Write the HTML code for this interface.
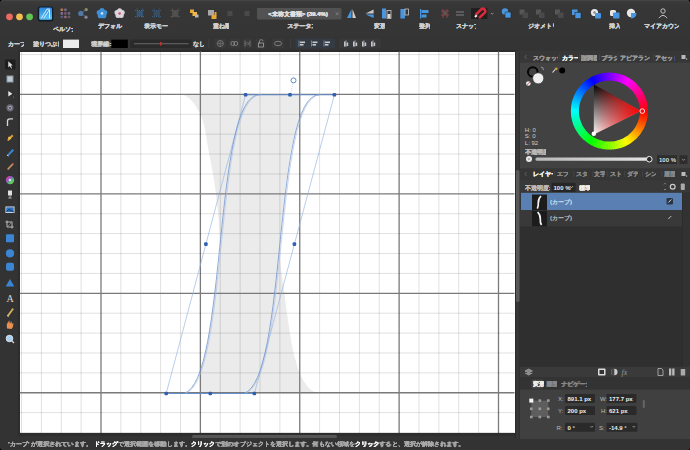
<!DOCTYPE html><html><head><meta charset="utf-8"><style>
*{margin:0;padding:0;box-sizing:border-box}
html,body{width:690px;height:450px;overflow:hidden;background:#000;font-family:"Liberation Sans",sans-serif}
.a{position:absolute}
.t{position:absolute;white-space:nowrap;color:#cfcfcf;font-size:6px;line-height:6px;font-weight:bold;text-shadow:0.4px 0 0 currentColor,0 0.4px 0 currentColor}
.l{font-weight:normal;text-shadow:none;font-size:6.5px}
.l.b{font-weight:bold}
#w{position:absolute;left:0;top:0;width:690px;height:450px;overflow:hidden;filter:blur(0.4px);border-radius:3.5px;background:#333}
</style></head><body><div id="w">
<div class="a" style="left:0;top:0;width:690px;height:36px;background:linear-gradient(#3b3b3b,#363636 7px,#353535)"></div><div class="a" style="left:0;top:36px;width:690px;height:15px;background:#343434"></div><div class="a" style="left:0;top:51px;width:18px;height:388px;background:#333"></div><div class="a" style="left:0;top:436px;width:690px;height:14px;background:#333"></div><div class="a" style="left:18px;top:49.5px;width:500px;height:386.5px;background:#2d2d2d"></div><div class="a" style="left:19.5px;top:51.5px;width:495px;height:381.5px;background:#fff"></div><svg class="a" style="left:0;top:0" width="690" height="450" viewBox="0 0 690 450"><defs><clipPath id="cv"><rect x="19.5" y="51.5" width="495" height="381.5"/></clipPath></defs><g clip-path="url(#cv)"><path d="M300,94.4 C299.97,97.83 300.38,109.07 299.8,115 C299.22,120.93 297.97,124.17 296.5,130 C295.03,135.83 292.92,139.33 291,150 C289.08,160.67 286.83,177.33 285,194 C283.17,210.67 280.10,233.50 280,250 C279.90,266.50 282.57,278.00 284.4,293 C286.23,308.00 289.10,328.67 291,340 C292.90,351.33 294.35,355.42 295.8,361 C297.25,366.58 298.17,369.83 299.7,373.5 C301.23,377.17 303.12,380.28 305,383 C306.88,385.72 309.00,388.05 311,389.8 C313.00,391.55 316.00,392.88 317,393.5 L200,393.5 C200.08,390.08 199.20,381.92 200.5,373 C201.80,364.08 205.48,353.33 207.8,340 C210.12,326.67 212.37,308.00 214.4,293 C216.43,278.00 219.73,266.50 220,250 C220.27,233.50 217.92,210.67 216,194 C214.08,177.33 210.33,160.67 208.5,150 C206.67,139.33 206.13,135.50 205,130 C203.87,124.50 202.87,120.33 201.7,117 C200.53,113.67 199.28,112.25 198,110 C196.72,107.75 195.50,105.45 194,103.5 C192.50,101.55 190.83,99.82 189,98.3 C187.17,96.78 184.00,95.05 183,94.4Z" fill="#ebebeb"/><line x1="21.50" y1="51" x2="21.50" y2="433" stroke="#000" stroke-opacity="0.12" stroke-width="1"/><line x1="41.38" y1="51" x2="41.38" y2="433" stroke="#000" stroke-opacity="0.12" stroke-width="1"/><line x1="61.25" y1="51" x2="61.25" y2="433" stroke="#000" stroke-opacity="0.12" stroke-width="1"/><line x1="81.12" y1="51" x2="81.12" y2="433" stroke="#000" stroke-opacity="0.12" stroke-width="1"/><line x1="101.00" y1="51" x2="101.00" y2="433" stroke="#7a7a7a" stroke-width="1.3"/><line x1="120.88" y1="51" x2="120.88" y2="433" stroke="#000" stroke-opacity="0.12" stroke-width="1"/><line x1="140.75" y1="51" x2="140.75" y2="433" stroke="#000" stroke-opacity="0.12" stroke-width="1"/><line x1="160.62" y1="51" x2="160.62" y2="433" stroke="#000" stroke-opacity="0.12" stroke-width="1"/><line x1="180.50" y1="51" x2="180.50" y2="433" stroke="#000" stroke-opacity="0.12" stroke-width="1"/><line x1="200.38" y1="51" x2="200.38" y2="433" stroke="#7a7a7a" stroke-width="1.3"/><line x1="220.25" y1="51" x2="220.25" y2="433" stroke="#000" stroke-opacity="0.12" stroke-width="1"/><line x1="240.12" y1="51" x2="240.12" y2="433" stroke="#000" stroke-opacity="0.12" stroke-width="1"/><line x1="260.00" y1="51" x2="260.00" y2="433" stroke="#000" stroke-opacity="0.12" stroke-width="1"/><line x1="279.88" y1="51" x2="279.88" y2="433" stroke="#000" stroke-opacity="0.12" stroke-width="1"/><line x1="299.75" y1="51" x2="299.75" y2="433" stroke="#7a7a7a" stroke-width="1.3"/><line x1="319.62" y1="51" x2="319.62" y2="433" stroke="#000" stroke-opacity="0.12" stroke-width="1"/><line x1="339.50" y1="51" x2="339.50" y2="433" stroke="#000" stroke-opacity="0.12" stroke-width="1"/><line x1="359.38" y1="51" x2="359.38" y2="433" stroke="#000" stroke-opacity="0.12" stroke-width="1"/><line x1="379.25" y1="51" x2="379.25" y2="433" stroke="#000" stroke-opacity="0.12" stroke-width="1"/><line x1="399.12" y1="51" x2="399.12" y2="433" stroke="#7a7a7a" stroke-width="1.3"/><line x1="419.00" y1="51" x2="419.00" y2="433" stroke="#000" stroke-opacity="0.12" stroke-width="1"/><line x1="438.88" y1="51" x2="438.88" y2="433" stroke="#000" stroke-opacity="0.12" stroke-width="1"/><line x1="458.75" y1="51" x2="458.75" y2="433" stroke="#000" stroke-opacity="0.12" stroke-width="1"/><line x1="478.62" y1="51" x2="478.62" y2="433" stroke="#000" stroke-opacity="0.12" stroke-width="1"/><line x1="498.50" y1="51" x2="498.50" y2="433" stroke="#7a7a7a" stroke-width="1.3"/><line x1="19.5" y1="54.62" x2="515" y2="54.62" stroke="#000" stroke-opacity="0.12" stroke-width="1"/><line x1="19.5" y1="74.51" x2="515" y2="74.51" stroke="#000" stroke-opacity="0.12" stroke-width="1"/><line x1="19.5" y1="94.40" x2="515" y2="94.40" stroke="#7a7a7a" stroke-width="1.3"/><line x1="19.5" y1="114.29" x2="515" y2="114.29" stroke="#000" stroke-opacity="0.12" stroke-width="1"/><line x1="19.5" y1="134.18" x2="515" y2="134.18" stroke="#000" stroke-opacity="0.12" stroke-width="1"/><line x1="19.5" y1="154.07" x2="515" y2="154.07" stroke="#000" stroke-opacity="0.12" stroke-width="1"/><line x1="19.5" y1="173.96" x2="515" y2="173.96" stroke="#000" stroke-opacity="0.12" stroke-width="1"/><line x1="19.5" y1="193.85" x2="515" y2="193.85" stroke="#7a7a7a" stroke-width="1.3"/><line x1="19.5" y1="213.74" x2="515" y2="213.74" stroke="#000" stroke-opacity="0.12" stroke-width="1"/><line x1="19.5" y1="233.63" x2="515" y2="233.63" stroke="#000" stroke-opacity="0.12" stroke-width="1"/><line x1="19.5" y1="253.52" x2="515" y2="253.52" stroke="#000" stroke-opacity="0.12" stroke-width="1"/><line x1="19.5" y1="273.41" x2="515" y2="273.41" stroke="#000" stroke-opacity="0.12" stroke-width="1"/><line x1="19.5" y1="293.30" x2="515" y2="293.30" stroke="#7a7a7a" stroke-width="1.3"/><line x1="19.5" y1="313.19" x2="515" y2="313.19" stroke="#000" stroke-opacity="0.12" stroke-width="1"/><line x1="19.5" y1="333.08" x2="515" y2="333.08" stroke="#000" stroke-opacity="0.12" stroke-width="1"/><line x1="19.5" y1="352.97" x2="515" y2="352.97" stroke="#000" stroke-opacity="0.12" stroke-width="1"/><line x1="19.5" y1="372.86" x2="515" y2="372.86" stroke="#000" stroke-opacity="0.12" stroke-width="1"/><line x1="19.5" y1="392.75" x2="515" y2="392.75" stroke="#7a7a7a" stroke-width="1.3"/><line x1="19.5" y1="412.64" x2="515" y2="412.64" stroke="#000" stroke-opacity="0.12" stroke-width="1"/><line x1="19.5" y1="432.53" x2="515" y2="432.53" stroke="#000" stroke-opacity="0.12" stroke-width="1"/><path d="M245.6,94.8 L166.2,393.5 M334.4,94.8 L254.4,393.5" stroke="#92b3e2" stroke-width="0.65" fill="none"/><path d="M245.6,94.8 L334.4,94.8 M166.2,393.5 L254.4,393.5" stroke="#5d8bd2" stroke-width="0.9" fill="none"/><path d="M259.50,94.8 C212.50,94.8 227.80,381.5 183.80,393.5" stroke="#6a90cf" stroke-width="0.75" fill="none"/><path d="M260.70,94.8 C213.70,94.8 229.00,381.5 185.00,393.5" stroke="#abc0e2" stroke-width="0.65" fill="none"/><path d="M319.30,94.8 C272.30,94.8 287.60,381.5 243.60,393.5" stroke="#6a90cf" stroke-width="0.75" fill="none"/><path d="M320.50,94.8 C273.50,94.8 288.80,381.5 244.80,393.5" stroke="#abc0e2" stroke-width="0.65" fill="none"/><line x1="290.2" y1="94.8" x2="293.3" y2="82.6" stroke="#92b3e2" stroke-width="0.5" stroke-dasharray="1 1"/><circle cx="293.5" cy="80.4" r="2.5" fill="#fff" stroke="#5d8bd2" stroke-width="1"/><rect x="243.79999999999998" y="93.0" width="3.6" height="3.6" rx="1.2" fill="#2f60b0"/><rect x="288.2" y="93.0" width="3.6" height="3.6" rx="1.2" fill="#2f60b0"/><rect x="332.59999999999997" y="93.0" width="3.6" height="3.6" rx="1.2" fill="#2f60b0"/><rect x="164.39999999999998" y="391.7" width="3.6" height="3.6" rx="1.2" fill="#2f60b0"/><rect x="208.5" y="391.7" width="3.6" height="3.6" rx="1.2" fill="#2f60b0"/><rect x="252.6" y="391.7" width="3.6" height="3.6" rx="1.2" fill="#2f60b0"/><rect x="204.1" y="242.35" width="3.6" height="3.6" rx="1.2" fill="#2f60b0"/><rect x="292.59999999999997" y="242.35" width="3.6" height="3.6" rx="1.2" fill="#2f60b0"/></g></svg><div class="a" style="left:192px;top:435px;width:145px;height:3px;background:#555;border-radius:2px"></div><div class="a" style="left:0;top:0;width:690px;height:1px;background:#444"></div><svg class="a" style="left:0;top:0" width="690" height="51" viewBox="0 0 690 51"><circle cx="9.5" cy="16.8" r="3.4" fill="#ec6a5f"/><circle cx="19.5" cy="16.8" r="3.4" fill="#f4be50"/><circle cx="29.6" cy="16.8" r="3.4" fill="#62c454"/><rect x="37.7" y="6.4" width="15.6" height="15" rx="2.5" fill="#0f1c2a"/><defs><linearGradient id="ad" x1="0" y1="0" x2="0" y2="1"><stop offset="0" stop-color="#2a86dc"/><stop offset="1" stop-color="#5cc6f7"/></linearGradient></defs><rect x="39.2" y="7.6" width="12.8" height="12.2" rx="1.2" fill="url(#ad)"/><path d="M41.5,18 L47,9 L49.5,9 M44,18 L49.5,9.5 L49.5,18" stroke="#e8f6ff" stroke-width="0.9" fill="none"/><rect x="60.5" y="8.5" width="2.6" height="2.6" rx="0.8" fill="#b07a50"/><rect x="64.1" y="8.5" width="2.6" height="2.6" rx="0.8" fill="#7a6a8a"/><rect x="60.5" y="12.1" width="2.6" height="2.6" rx="0.8" fill="#8a6a9a"/><rect x="64.1" y="12.1" width="2.6" height="2.6" rx="0.8" fill="#7a5a6a"/><rect x="67.7" y="12.1" width="2.6" height="2.6" rx="0.8" fill="#6a6a8a"/><rect x="60.5" y="15.7" width="2.6" height="2.6" rx="0.8" fill="#5a5a7a"/><rect x="64.1" y="15.7" width="2.6" height="2.6" rx="0.8" fill="#8a6a7a"/><rect x="67.7" y="15.7" width="2.6" height="2.6" rx="0.8" fill="#6a5a6a"/><circle cx="80.8" cy="13.4" r="2.6" fill="#4f78a6"/><circle cx="86.2" cy="9.6" r="1.6" fill="#8a9a6a"/><circle cx="86" cy="17.2" r="1.6" fill="#8a8aa0"/><path d="M81,13.4 L86,9.6 M81,13.4 L86,17" stroke="#5a7a9a" stroke-width="0.8"/><circle cx="102.00" cy="10.54" r="2.60" fill="#3f8fd6"/><circle cx="104.72" cy="12.52" r="2.60" fill="#3f8fd6"/><circle cx="103.68" cy="15.71" r="2.60" fill="#3f8fd6"/><circle cx="100.32" cy="15.71" r="2.60" fill="#3f8fd6"/><circle cx="99.28" cy="12.52" r="2.60" fill="#3f8fd6"/><circle cx="102" cy="13.4" r="3.12" fill="#3f8fd6"/><circle cx="102" cy="13.4" r="1.30" fill="#bfe3ff"/><circle cx="119.60" cy="10.65" r="2.50" fill="#dcd6dc"/><circle cx="122.22" cy="12.55" r="2.50" fill="#dcd6dc"/><circle cx="121.22" cy="15.62" r="2.50" fill="#dcd6dc"/><circle cx="117.98" cy="15.62" r="2.50" fill="#dcd6dc"/><circle cx="116.98" cy="12.55" r="2.50" fill="#dcd6dc"/><circle cx="119.6" cy="13.4" r="3.00" fill="#dcd6dc"/><circle cx="119.6" cy="13.4" r="1.25" fill="#c85a6a"/><g opacity="1"><rect x="137.3" y="10.8" width="4.9" height="5.4" fill="#3a7cc6" opacity="0.45"/><path d="M135,10.5 H144.5 M135,16.5 H144.5 M137,8.5 V18.5 M142.5,8.5 V18.5" stroke="#3a7cc6" stroke-width="0.7" stroke-dasharray="1 1"/></g><g opacity="1"><rect x="154.3" y="10.8" width="4.9" height="5.4" fill="#3a6a9a" opacity="0.45"/><path d="M152,10.5 H161.5 M152,16.5 H161.5 M154,8.5 V18.5 M159.5,8.5 V18.5" stroke="#3a6a9a" stroke-width="0.7" stroke-dasharray="1 1"/></g><g opacity="1"><rect x="172.8" y="10.8" width="4.9" height="5.4" fill="#707070" opacity="0.45"/><path d="M170.5,10.5 H180.0 M170.5,16.5 H180.0 M172.5,8.5 V18.5 M178.0,8.5 V18.5" stroke="#707070" stroke-width="0.7" stroke-dasharray="1 1"/></g><rect x="190" y="9.5" width="4" height="3.5" fill="#e8a838"/><rect x="192.5" y="12" width="4.5" height="4" fill="#f0b840"/><rect x="195" y="14.5" width="3.5" height="3" fill="#b8b8b8"/><rect x="208" y="10" width="6" height="5.5" fill="#a8a8a8"/><path d="M211.5,15 H216.5 V19 H211.5 Z" fill="#e8a838"/><rect x="214.5" y="12" width="2" height="3.5" fill="#e8a838"/><rect x="223" y="8" width="14.5" height="11.5" rx="1" fill="#363636"/><rect x="239" y="8" width="16.5" height="11.5" rx="1" fill="#363636"/><rect x="227.5" y="11" width="5" height="5" fill="#4a4a4a"/><rect x="244.5" y="11" width="5" height="5" fill="#4a4a4a"/><rect x="257" y="8" width="84.5" height="11.4" rx="1.2" fill="#525252"/><path d="M335.8,12.3 L338.6,15.1 M338.6,12.3 L335.8,15.1" stroke="#8a8a8a" stroke-width="0.8"/><path d="M351.5,9 L347,18 L351.5,18 Z" fill="#4896e0"/><path d="M352.5,9 L356,18 L352.5,18 Z" fill="#d0d0d0"/><path d="M373.6,9.5 L365.6,13.5 L373.6,13.5 Z" fill="#c8c8c8"/><path d="M373.6,14.5 L365.6,14.5 L373.6,18 Z" fill="#4896e0"/><rect x="382" y="8.5" width="4" height="10" fill="#4896e0"/><rect x="387" y="10.5" width="4" height="8" fill="none" stroke="#c8c8c8" stroke-width="0.8"/><rect x="387.5" y="14" width="3" height="4" fill="#d8d8d8"/><rect x="400.4" y="9" width="4.5" height="9.5" fill="#4896e0"/><rect x="405" y="9" width="3.5" height="6" fill="none" stroke="#c8c8c8" stroke-width="0.8"/><rect x="420" y="9" width="1.2" height="9.5" fill="#4896e0"/><rect x="421.5" y="10" width="7" height="3" fill="#4896e0"/><rect x="421.5" y="14.5" width="5" height="3" fill="#4896e0"/><path d="M441,11 H449 M441,15 H449 M443,9 V18 M447,9 V18" stroke="#9a4a4a" stroke-width="0.8"/><rect x="443.5" y="11.5" width="3" height="3" fill="#5a5a5a"/><path d="M456,12 H464 M456,15 H464" stroke="#8a8a8a" stroke-width="0.9"/><rect x="471" y="8" width="16.5" height="11" rx="1" fill="#202020"/><path d="M475.5,17 L481.5,11 A2.6,2.6 0 0 1 485,14.5 L479,20" stroke="#d82a3a" stroke-width="2.6" fill="none" transform="translate(0,-2)"/><path d="M475.2,15.4 l1.4,1.4" stroke="#eee" stroke-width="2.6"/><path d="M491,13 l1.2,1.2 l1.2,-1.2" stroke="#aaa" stroke-width="0.8" fill="none"/><circle cx="505" cy="11.5" r="3.2" fill="#4896e0"/><rect x="505" y="12" width="6" height="6" rx="1" fill="#4896e0" stroke="#2c2c2c" stroke-width="0.6"/><rect x="519.6" y="9.5" width="5" height="5" fill="#575757"/><rect x="522.6" y="12.5" width="5.5" height="5.5" fill="#4a4a4a"/><rect x="536" y="9.5" width="5" height="5" fill="#575757"/><rect x="539" y="12.5" width="5.5" height="5.5" fill="#4a4a4a"/><rect x="555" y="9.5" width="5" height="5" fill="#575757"/><rect x="558" y="12.5" width="5.5" height="5.5" fill="#4a4a4a"/><rect x="572" y="9.5" width="5.5" height="5.5" fill="#4896e0"/><rect x="575" y="12.5" width="6" height="6" fill="#4896e0" stroke="#2c2c2c" stroke-width="0.6"/><circle cx="594.5" cy="12.5" r="3.6" fill="#e8e8e8"/><rect x="595" y="13" width="6" height="5.5" rx="1" fill="#4896e0"/><circle cx="594.5" cy="12.5" r="1.2" fill="#888"/><rect x="610" y="10" width="6" height="6" rx="1.5" fill="#e8e8e8"/><rect x="613" y="12.5" width="6.5" height="6" rx="0.8" fill="#4896e0"/><circle cx="631" cy="13" r="4.2" fill="#e8e8e8"/><path d="M631,13 V18.5 A5,5 0 0 0 636.5,13 Z" fill="#4896e0"/><circle cx="663" cy="11" r="2.2" fill="none" stroke="#cfcfcf" stroke-width="0.9"/><path d="M658.8,18.2 Q663,12.5 667.2,18.2" fill="none" stroke="#cfcfcf" stroke-width="0.9"/><rect x="63" y="39.6" width="16" height="8.4" fill="#ececec"/><rect x="111.3" y="39.6" width="16.5" height="8.4" fill="#000"/><rect x="130.4" y="39.5" width="61" height="8.5" fill="#2a2a2a"/><rect x="134" y="43" width="54.7" height="1.3" fill="#5a5a5a"/><rect x="160" y="42" width="1.6" height="3.5" fill="#c83030"/><rect x="208.5" y="38.5" width="0.6" height="10" fill="#444"/><rect x="214.5" y="38.5" width="11.5" height="10" rx="1" fill="#393939"/><rect x="228.5" y="38.5" width="11.5" height="10" rx="1" fill="#393939"/><rect x="242.5" y="38.5" width="10" height="10" rx="1" fill="#393939"/><rect x="255.5" y="38.5" width="10.5" height="10" rx="1" fill="#393939"/><rect x="272" y="38.5" width="12" height="10" rx="1" fill="#393939"/><circle cx="220.3" cy="43.5" r="3" fill="none" stroke="#8a8a8a" stroke-width="0.7"/><path d="M217.3,43.5 H223.3 M220.3,40.5 V46.5" stroke="#8a8a8a" stroke-width="0.5"/><rect x="231" y="41.5" width="3.5" height="4" rx="1.5" fill="none" stroke="#9a9a9a" stroke-width="0.7"/><rect x="234" y="41.5" width="3.5" height="4" rx="1.5" fill="none" stroke="#9a9a9a" stroke-width="0.7"/><path d="M245,40.5 V46.5 M250,40.5 V46.5 M246,43.5 l1.2,-1.2 M246,43.5 l1.2,1.2 M249,43.5 l-1.2,-1.2 M249,43.5 l-1.2,1.2" stroke="#9a9a9a" stroke-width="0.6"/><rect x="258.5" y="43" width="5" height="4" fill="none" stroke="#b0b0b0" stroke-width="0.7"/><path d="M259.5,43 V41 A1.8,1.8 0 0 1 263,41" fill="none" stroke="#b0b0b0" stroke-width="0.6"/><ellipse cx="278" cy="43.5" rx="3.6" ry="2.2" fill="none" stroke="#9a9a9a" stroke-width="0.7"/><rect x="290.5" y="38.5" width="0.6" height="10" fill="#444"/><rect x="295.5" y="38.5" width="39.5" height="10" rx="1" fill="#353b44"/><rect x="339" y="38.5" width="42" height="10" rx="1" fill="#393939"/><path d="M299,40.5 V46.5" stroke="#8aa6cc" stroke-width="0.7"/><rect x="300" y="41.5" width="5" height="1.6" fill="#c8c8c8"/><rect x="300" y="44" width="3.5" height="1.6" fill="#c8c8c8"/><path d="M311.5,40.5 V46.5" stroke="#8aa6cc" stroke-width="0.7"/><rect x="312.5" y="41.5" width="5" height="1.6" fill="#c8c8c8"/><rect x="312.5" y="44" width="3.5" height="1.6" fill="#c8c8c8"/><path d="M324,40.5 V46.5" stroke="#8aa6cc" stroke-width="0.7"/><rect x="325" y="41.5" width="5" height="1.6" fill="#c8c8c8"/><rect x="325" y="44" width="3.5" height="1.6" fill="#c8c8c8"/><path d="M346,40 V47" stroke="#8aa6cc" stroke-width="0.7"/><rect x="344" y="41.5" width="1.6" height="5" fill="#c8c8c8"/><rect x="346.6" y="42.5" width="1.6" height="3.5" fill="#c8c8c8"/><path d="M355,40 V47" stroke="#8aa6cc" stroke-width="0.7"/><rect x="353" y="41.5" width="1.6" height="5" fill="#c8c8c8"/><rect x="355.6" y="42.5" width="1.6" height="3.5" fill="#c8c8c8"/><path d="M364,40 V47" stroke="#8aa6cc" stroke-width="0.7"/><rect x="362" y="41.5" width="1.6" height="5" fill="#c8c8c8"/><rect x="364.6" y="42.5" width="1.6" height="3.5" fill="#c8c8c8"/><path d="M373,40 V47" stroke="#8aa6cc" stroke-width="0.7"/><rect x="371" y="41.5" width="1.6" height="5" fill="#c8c8c8"/><rect x="373.6" y="42.5" width="1.6" height="3.5" fill="#c8c8c8"/></svg><div class="t" style="left:52.6px;top:24.6px;width:20.7px;height:8px;overflow:hidden;font-size:6px;line-height:8px;color:#cfcfcf;">ペルソナ</div><div class="t" style="left:97.8px;top:21.6px;width:25.5px;height:8px;overflow:hidden;font-size:6px;line-height:8px;color:#cfcfcf;">デフォルト</div><div class="t" style="left:143.5px;top:21.6px;width:25.5px;height:8px;overflow:hidden;font-size:6px;line-height:8px;color:#cfcfcf;">表示モード</div><div class="t" style="left:213px;top:21.6px;width:15.9px;height:8px;overflow:hidden;font-size:6px;line-height:8px;color:#cfcfcf;">重ね順</div><div class="t" style="left:287.4px;top:21.6px;width:25.5px;height:8px;overflow:hidden;font-size:6px;line-height:8px;color:#cfcfcf;">ステータス</div><div class="t" style="left:373.6px;top:21.6px;width:11.1px;height:8px;overflow:hidden;font-size:6px;line-height:8px;color:#cfcfcf;">変形</div><div class="t" style="left:418.7px;top:21.6px;width:11.1px;height:8px;overflow:hidden;font-size:6px;line-height:8px;color:#cfcfcf;">整列</div><div class="t" style="left:455.6px;top:21.6px;width:20.7px;height:8px;overflow:hidden;font-size:6px;line-height:8px;color:#cfcfcf;">スナップ</div><div class="t" style="left:528px;top:21.6px;width:25.5px;height:8px;overflow:hidden;font-size:6px;line-height:8px;color:#cfcfcf;">ジオメトリ</div><div class="t" style="left:608.8px;top:21.6px;width:11.1px;height:8px;overflow:hidden;font-size:6px;line-height:8px;color:#cfcfcf;">挿入</div><div class="t" style="left:643.6px;top:21.6px;width:35.1px;height:8px;overflow:hidden;font-size:6px;line-height:8px;color:#cfcfcf;">マイアカウント</div><div class="t" style="left:268px;top:10.2px;width:73.5px;height:8px;overflow:hidden;font-size:6px;line-height:8px;color:#e0e0e0;">&lt;未称文書類&gt; (39.4%)</div><div class="t" style="left:7.8px;top:40px;width:15.9px;height:8px;overflow:hidden;font-size:6px;line-height:8px;color:#cfcfcf;">カーブ</div><div class="t" style="left:33px;top:40px;width:25.5px;height:8px;overflow:hidden;font-size:6px;line-height:8px;color:#cfcfcf;">塗りつぶし</div><div class="t" style="left:91.3px;top:40px;width:20.7px;height:8px;overflow:hidden;font-size:6px;line-height:8px;color:#cfcfcf;">境界線:</div><div class="t" style="left:193px;top:40px;width:11.1px;height:8px;overflow:hidden;font-size:6px;line-height:8px;color:#cfcfcf;">なし</div><svg class="a" style="left:0;top:51px" width="20" height="300" viewBox="0 51 20 300"><rect x="5" y="59.5" width="10.5" height="10" rx="1" fill="#1e1e1e"/><path d="M8.3,61.3 V67.5 L9.8,66 L11.2,68.6 L12,68.2 L10.8,65.6 L12.8,65.4 Z" fill="#e0e0e0"/><rect x="6.5" y="75.5" width="7" height="7" fill="#8a9aa8"/><rect x="7.5" y="76.5" width="5" height="5" fill="#c0c8d0"/><path d="M8.3,91 V96.5 L12.3,93.7 Z" fill="#e8e8e8"/><circle cx="13.5" cy="97" r="0.5" fill="#888"/><circle cx="10" cy="107.8" r="3.6" fill="#6a6a78"/><circle cx="10" cy="107.8" r="2" fill="#a0a0b0"/><circle cx="10" cy="107.8" r="0.9" fill="#334"/><path d="M7.5,126 V121 Q7.5,118.8 10,118.8 H13" stroke="#d8d8d8" stroke-width="1.3" fill="none"/><path d="M7,140 L12,134.5 L13.5,136 L8.5,141 Z" fill="#d8a038"/><circle cx="9.5" cy="138" r="1.5" fill="#f0c050"/><path d="M7,155 L12.5,149 L14,150.5 L8.5,156 Z" fill="#3a88d0"/><path d="M7,155 l1.5,1" stroke="#ddd" stroke-width="1"/><path d="M7,169 L12.5,163 L13.8,164.3 L8.3,170 Z" fill="#c89060"/><path d="M12.5,163 l1.3,1.3" stroke="#a83a3a" stroke-width="1.2"/><defs><linearGradient id="cw" x1="0" y1="0" x2="1" y2="1"><stop offset="0" stop-color="#e84a4a"/><stop offset="0.35" stop-color="#a64ad8"/><stop offset="0.65" stop-color="#3ac86a"/><stop offset="1" stop-color="#e8c838"/></linearGradient></defs><circle cx="10" cy="180.1" r="4.2" fill="url(#cw)"/><circle cx="10" cy="180.1" r="1.3" fill="#ddd"/><path d="M8,190.5 H12 V195.5 H8 Z" fill="#e0e0e0"/><path d="M10,195.5 V198 M8.3,198 H11.7" stroke="#ccc" stroke-width="0.8"/><rect x="5.5" y="206.5" width="9" height="6.5" fill="#e8e8e8"/><rect x="6.3" y="207.3" width="7.4" height="4.9" fill="#2a72c0"/><path d="M6.3,211.5 L9,209.5 L13.7,212" stroke="#16365a" stroke-width="1" fill="none"/><path d="M7,220.5 V227 H13.5 M5.5,222 H12 V228.5" stroke="#c8c8c8" stroke-width="0.9" fill="none"/><path d="M7.5,226.5 L12.5,221.5" stroke="#999" stroke-width="0.6"/><rect x="6" y="234.3" width="8" height="8" rx="0.8" fill="#3a86d4"/><circle cx="10" cy="253.3" r="4.1" fill="#3a86d4"/><rect x="6" y="262.7" width="8" height="8" rx="2" fill="#3a86d4"/><path d="M10,279 L14.3,286.5 H5.7 Z" fill="#3a86d4"/><text x="10" y="302.3" font-family="Liberation Serif" font-size="10" fill="#d8d8d8" text-anchor="middle">A</text><path d="M7,315.5 L12.5,308 L13.8,309.3 L8.5,316.5 Z" fill="#d8b060"/><path d="M7,315.5 l1.5,1" stroke="#ddd" stroke-width="1"/><path d="M7,328.5 Q6.5,324 7.3,322 L7.8,324 L8.3,320.5 L9.2,323.5 L9.8,320 L10.6,323.5 L11.4,321 L12,324 L13.5,323 Q13.5,327 11.5,329 Z" fill="#e89050"/><circle cx="9.5" cy="338.5" r="3.3" fill="#a8d0f0" stroke="#e0e8f0" stroke-width="0.9"/><path d="M12,341 L14,343" stroke="#d8d8d8" stroke-width="1.3"/></svg><svg class="a" style="left:515px;top:51px" width="175" height="388" viewBox="515 51 175 388"><rect x="515" y="51" width="175" height="388" fill="#2a2a2a"/><rect x="516" y="51" width="3.5" height="388" fill="#363636"/><rect x="516" y="170" width="3.5" height="132" rx="1.5" fill="#585858"/><rect x="520" y="51" width="170" height="388" fill="#2f2f2f"/><rect x="520" y="51" width="170" height="11.5" fill="#373737"/><rect x="520" y="62.5" width="170" height="106.2" fill="#424242"/><circle cx="532.8" cy="72" r="4.8" fill="none" stroke="#050505" stroke-width="2"/><circle cx="538.2" cy="78.3" r="5.6" fill="#efefef" stroke="#3c3c3c" stroke-width="0.8"/><circle cx="528.3" cy="83.5" r="2.3" fill="#eee"/><path d="M526.8,85 L529.8,82" stroke="#d03030" stroke-width="0.8"/><path d="M541,67 Q543.5,67 543.5,70" stroke="#ccc" stroke-width="0.6" fill="none"/><path d="M552.5,72.5 L556,68.5" stroke="#e8e8e8" stroke-width="1.1"/><circle cx="556.2" cy="68.8" r="1.4" fill="#c89a38"/><circle cx="562.2" cy="70.4" r="3" fill="#000"/><path d="M643.90,110.86 A34.5,34.5 0 0 1 643.84,113.15" stroke="hsl(0,100%,50%)" stroke-width="8" fill="none"/><path d="M643.86,112.67 A34.5,34.5 0 0 1 643.68,114.95" stroke="hsl(3,100%,50%)" stroke-width="8" fill="none"/><path d="M643.74,114.47 A34.5,34.5 0 0 1 643.44,116.73" stroke="hsl(6,100%,50%)" stroke-width="8" fill="none"/><path d="M643.51,116.26 A34.5,34.5 0 0 1 643.10,118.51" stroke="hsl(9,100%,50%)" stroke-width="8" fill="none"/><path d="M643.20,118.04 A34.5,34.5 0 0 1 642.66,120.26" stroke="hsl(12,100%,50%)" stroke-width="8" fill="none"/><path d="M642.79,119.80 A34.5,34.5 0 0 1 642.14,121.99" stroke="hsl(15,100%,50%)" stroke-width="8" fill="none"/><path d="M642.29,121.53 A34.5,34.5 0 0 1 641.52,123.69" stroke="hsl(18,100%,50%)" stroke-width="8" fill="none"/><path d="M641.69,123.24 A34.5,34.5 0 0 1 640.82,125.35" stroke="hsl(21,100%,50%)" stroke-width="8" fill="none"/><path d="M641.01,124.91 A34.5,34.5 0 0 1 640.03,126.98" stroke="hsl(24,100%,50%)" stroke-width="8" fill="none"/><path d="M640.25,126.55 A34.5,34.5 0 0 1 639.16,128.56" stroke="hsl(27,100%,50%)" stroke-width="8" fill="none"/><path d="M639.40,128.14 A34.5,34.5 0 0 1 638.20,130.09" stroke="hsl(30,100%,50%)" stroke-width="8" fill="none"/><path d="M638.46,129.69 A34.5,34.5 0 0 1 637.17,131.57" stroke="hsl(33,100%,50%)" stroke-width="8" fill="none"/><path d="M637.45,131.18 A34.5,34.5 0 0 1 636.06,133.00" stroke="hsl(36,100%,50%)" stroke-width="8" fill="none"/><path d="M636.36,132.62 A34.5,34.5 0 0 1 634.88,134.36" stroke="hsl(39,100%,50%)" stroke-width="8" fill="none"/><path d="M635.20,134.01 A34.5,34.5 0 0 1 633.62,135.66" stroke="hsl(42,100%,50%)" stroke-width="8" fill="none"/><path d="M633.96,135.32 A34.5,34.5 0 0 1 632.31,136.90" stroke="hsl(45,100%,50%)" stroke-width="8" fill="none"/><path d="M632.66,136.58 A34.5,34.5 0 0 1 630.92,138.06" stroke="hsl(48,100%,50%)" stroke-width="8" fill="none"/><path d="M631.30,137.76 A34.5,34.5 0 0 1 629.48,139.15" stroke="hsl(51,100%,50%)" stroke-width="8" fill="none"/><path d="M629.87,138.87 A34.5,34.5 0 0 1 627.99,140.16" stroke="hsl(54,100%,50%)" stroke-width="8" fill="none"/><path d="M628.39,139.90 A34.5,34.5 0 0 1 626.44,141.10" stroke="hsl(57,100%,50%)" stroke-width="8" fill="none"/><path d="M626.86,140.86 A34.5,34.5 0 0 1 624.85,141.95" stroke="hsl(60,100%,50%)" stroke-width="8" fill="none"/><path d="M625.28,141.73 A34.5,34.5 0 0 1 623.21,142.71" stroke="hsl(63,100%,50%)" stroke-width="8" fill="none"/><path d="M623.65,142.52 A34.5,34.5 0 0 1 621.54,143.39" stroke="hsl(66,100%,50%)" stroke-width="8" fill="none"/><path d="M621.99,143.22 A34.5,34.5 0 0 1 619.83,143.99" stroke="hsl(69,100%,50%)" stroke-width="8" fill="none"/><path d="M620.29,143.84 A34.5,34.5 0 0 1 618.10,144.49" stroke="hsl(72,100%,50%)" stroke-width="8" fill="none"/><path d="M618.56,144.36 A34.5,34.5 0 0 1 616.34,144.90" stroke="hsl(75,100%,50%)" stroke-width="8" fill="none"/><path d="M616.81,144.80 A34.5,34.5 0 0 1 614.56,145.21" stroke="hsl(78,100%,50%)" stroke-width="8" fill="none"/><path d="M615.03,145.14 A34.5,34.5 0 0 1 612.77,145.44" stroke="hsl(81,100%,50%)" stroke-width="8" fill="none"/><path d="M613.25,145.38 A34.5,34.5 0 0 1 610.97,145.56" stroke="hsl(84,100%,50%)" stroke-width="8" fill="none"/><path d="M611.45,145.54 A34.5,34.5 0 0 1 609.16,145.60" stroke="hsl(87,100%,50%)" stroke-width="8" fill="none"/><path d="M609.64,145.60 A34.5,34.5 0 0 1 607.35,145.54" stroke="hsl(90,100%,50%)" stroke-width="8" fill="none"/><path d="M607.83,145.56 A34.5,34.5 0 0 1 605.55,145.38" stroke="hsl(93,100%,50%)" stroke-width="8" fill="none"/><path d="M606.03,145.44 A34.5,34.5 0 0 1 603.77,145.14" stroke="hsl(96,100%,50%)" stroke-width="8" fill="none"/><path d="M604.24,145.21 A34.5,34.5 0 0 1 601.99,144.80" stroke="hsl(99,100%,50%)" stroke-width="8" fill="none"/><path d="M602.46,144.90 A34.5,34.5 0 0 1 600.24,144.36" stroke="hsl(102,100%,50%)" stroke-width="8" fill="none"/><path d="M600.70,144.49 A34.5,34.5 0 0 1 598.51,143.84" stroke="hsl(105,100%,50%)" stroke-width="8" fill="none"/><path d="M598.97,143.99 A34.5,34.5 0 0 1 596.81,143.22" stroke="hsl(108,100%,50%)" stroke-width="8" fill="none"/><path d="M597.26,143.39 A34.5,34.5 0 0 1 595.15,142.52" stroke="hsl(111,100%,50%)" stroke-width="8" fill="none"/><path d="M595.59,142.71 A34.5,34.5 0 0 1 593.52,141.73" stroke="hsl(114,100%,50%)" stroke-width="8" fill="none"/><path d="M593.95,141.95 A34.5,34.5 0 0 1 591.94,140.86" stroke="hsl(117,100%,50%)" stroke-width="8" fill="none"/><path d="M592.36,141.10 A34.5,34.5 0 0 1 590.41,139.90" stroke="hsl(120,100%,50%)" stroke-width="8" fill="none"/><path d="M590.81,140.16 A34.5,34.5 0 0 1 588.93,138.87" stroke="hsl(123,100%,50%)" stroke-width="8" fill="none"/><path d="M589.32,139.15 A34.5,34.5 0 0 1 587.50,137.76" stroke="hsl(126,100%,50%)" stroke-width="8" fill="none"/><path d="M587.88,138.06 A34.5,34.5 0 0 1 586.14,136.58" stroke="hsl(129,100%,50%)" stroke-width="8" fill="none"/><path d="M586.49,136.90 A34.5,34.5 0 0 1 584.84,135.32" stroke="hsl(132,100%,50%)" stroke-width="8" fill="none"/><path d="M585.18,135.66 A34.5,34.5 0 0 1 583.60,134.01" stroke="hsl(135,100%,50%)" stroke-width="8" fill="none"/><path d="M583.92,134.36 A34.5,34.5 0 0 1 582.44,132.62" stroke="hsl(138,100%,50%)" stroke-width="8" fill="none"/><path d="M582.74,133.00 A34.5,34.5 0 0 1 581.35,131.18" stroke="hsl(141,100%,50%)" stroke-width="8" fill="none"/><path d="M581.63,131.57 A34.5,34.5 0 0 1 580.34,129.69" stroke="hsl(144,100%,50%)" stroke-width="8" fill="none"/><path d="M580.60,130.09 A34.5,34.5 0 0 1 579.40,128.14" stroke="hsl(147,100%,50%)" stroke-width="8" fill="none"/><path d="M579.64,128.56 A34.5,34.5 0 0 1 578.55,126.55" stroke="hsl(150,100%,50%)" stroke-width="8" fill="none"/><path d="M578.77,126.98 A34.5,34.5 0 0 1 577.79,124.91" stroke="hsl(153,100%,50%)" stroke-width="8" fill="none"/><path d="M577.98,125.35 A34.5,34.5 0 0 1 577.11,123.24" stroke="hsl(156,100%,50%)" stroke-width="8" fill="none"/><path d="M577.28,123.69 A34.5,34.5 0 0 1 576.51,121.53" stroke="hsl(159,100%,50%)" stroke-width="8" fill="none"/><path d="M576.66,121.99 A34.5,34.5 0 0 1 576.01,119.80" stroke="hsl(162,100%,50%)" stroke-width="8" fill="none"/><path d="M576.14,120.26 A34.5,34.5 0 0 1 575.60,118.04" stroke="hsl(165,100%,50%)" stroke-width="8" fill="none"/><path d="M575.70,118.51 A34.5,34.5 0 0 1 575.29,116.26" stroke="hsl(168,100%,50%)" stroke-width="8" fill="none"/><path d="M575.36,116.73 A34.5,34.5 0 0 1 575.06,114.47" stroke="hsl(171,100%,50%)" stroke-width="8" fill="none"/><path d="M575.12,114.95 A34.5,34.5 0 0 1 574.94,112.67" stroke="hsl(174,100%,50%)" stroke-width="8" fill="none"/><path d="M574.96,113.15 A34.5,34.5 0 0 1 574.90,110.86" stroke="hsl(177,100%,50%)" stroke-width="8" fill="none"/><path d="M574.90,111.34 A34.5,34.5 0 0 1 574.96,109.05" stroke="hsl(180,100%,50%)" stroke-width="8" fill="none"/><path d="M574.94,109.53 A34.5,34.5 0 0 1 575.12,107.25" stroke="hsl(183,100%,50%)" stroke-width="8" fill="none"/><path d="M575.06,107.73 A34.5,34.5 0 0 1 575.36,105.47" stroke="hsl(186,100%,50%)" stroke-width="8" fill="none"/><path d="M575.29,105.94 A34.5,34.5 0 0 1 575.70,103.69" stroke="hsl(189,100%,50%)" stroke-width="8" fill="none"/><path d="M575.60,104.16 A34.5,34.5 0 0 1 576.14,101.94" stroke="hsl(192,100%,50%)" stroke-width="8" fill="none"/><path d="M576.01,102.40 A34.5,34.5 0 0 1 576.66,100.21" stroke="hsl(195,100%,50%)" stroke-width="8" fill="none"/><path d="M576.51,100.67 A34.5,34.5 0 0 1 577.28,98.51" stroke="hsl(198,100%,50%)" stroke-width="8" fill="none"/><path d="M577.11,98.96 A34.5,34.5 0 0 1 577.98,96.85" stroke="hsl(201,100%,50%)" stroke-width="8" fill="none"/><path d="M577.79,97.29 A34.5,34.5 0 0 1 578.77,95.22" stroke="hsl(204,100%,50%)" stroke-width="8" fill="none"/><path d="M578.55,95.65 A34.5,34.5 0 0 1 579.64,93.64" stroke="hsl(207,100%,50%)" stroke-width="8" fill="none"/><path d="M579.40,94.06 A34.5,34.5 0 0 1 580.60,92.11" stroke="hsl(210,100%,50%)" stroke-width="8" fill="none"/><path d="M580.34,92.51 A34.5,34.5 0 0 1 581.63,90.63" stroke="hsl(213,100%,50%)" stroke-width="8" fill="none"/><path d="M581.35,91.02 A34.5,34.5 0 0 1 582.74,89.20" stroke="hsl(216,100%,50%)" stroke-width="8" fill="none"/><path d="M582.44,89.58 A34.5,34.5 0 0 1 583.92,87.84" stroke="hsl(219,100%,50%)" stroke-width="8" fill="none"/><path d="M583.60,88.19 A34.5,34.5 0 0 1 585.18,86.54" stroke="hsl(222,100%,50%)" stroke-width="8" fill="none"/><path d="M584.84,86.88 A34.5,34.5 0 0 1 586.49,85.30" stroke="hsl(225,100%,50%)" stroke-width="8" fill="none"/><path d="M586.14,85.62 A34.5,34.5 0 0 1 587.88,84.14" stroke="hsl(228,100%,50%)" stroke-width="8" fill="none"/><path d="M587.50,84.44 A34.5,34.5 0 0 1 589.32,83.05" stroke="hsl(231,100%,50%)" stroke-width="8" fill="none"/><path d="M588.93,83.33 A34.5,34.5 0 0 1 590.81,82.04" stroke="hsl(234,100%,50%)" stroke-width="8" fill="none"/><path d="M590.41,82.30 A34.5,34.5 0 0 1 592.36,81.10" stroke="hsl(237,100%,50%)" stroke-width="8" fill="none"/><path d="M591.94,81.34 A34.5,34.5 0 0 1 593.95,80.25" stroke="hsl(240,100%,50%)" stroke-width="8" fill="none"/><path d="M593.52,80.47 A34.5,34.5 0 0 1 595.59,79.49" stroke="hsl(243,100%,50%)" stroke-width="8" fill="none"/><path d="M595.15,79.68 A34.5,34.5 0 0 1 597.26,78.81" stroke="hsl(246,100%,50%)" stroke-width="8" fill="none"/><path d="M596.81,78.98 A34.5,34.5 0 0 1 598.97,78.21" stroke="hsl(249,100%,50%)" stroke-width="8" fill="none"/><path d="M598.51,78.36 A34.5,34.5 0 0 1 600.70,77.71" stroke="hsl(252,100%,50%)" stroke-width="8" fill="none"/><path d="M600.24,77.84 A34.5,34.5 0 0 1 602.46,77.30" stroke="hsl(255,100%,50%)" stroke-width="8" fill="none"/><path d="M601.99,77.40 A34.5,34.5 0 0 1 604.24,76.99" stroke="hsl(258,100%,50%)" stroke-width="8" fill="none"/><path d="M603.77,77.06 A34.5,34.5 0 0 1 606.03,76.76" stroke="hsl(261,100%,50%)" stroke-width="8" fill="none"/><path d="M605.55,76.82 A34.5,34.5 0 0 1 607.83,76.64" stroke="hsl(264,100%,50%)" stroke-width="8" fill="none"/><path d="M607.35,76.66 A34.5,34.5 0 0 1 609.64,76.60" stroke="hsl(267,100%,50%)" stroke-width="8" fill="none"/><path d="M609.16,76.60 A34.5,34.5 0 0 1 611.45,76.66" stroke="hsl(270,100%,50%)" stroke-width="8" fill="none"/><path d="M610.97,76.64 A34.5,34.5 0 0 1 613.25,76.82" stroke="hsl(273,100%,50%)" stroke-width="8" fill="none"/><path d="M612.77,76.76 A34.5,34.5 0 0 1 615.03,77.06" stroke="hsl(276,100%,50%)" stroke-width="8" fill="none"/><path d="M614.56,76.99 A34.5,34.5 0 0 1 616.81,77.40" stroke="hsl(279,100%,50%)" stroke-width="8" fill="none"/><path d="M616.34,77.30 A34.5,34.5 0 0 1 618.56,77.84" stroke="hsl(282,100%,50%)" stroke-width="8" fill="none"/><path d="M618.10,77.71 A34.5,34.5 0 0 1 620.29,78.36" stroke="hsl(285,100%,50%)" stroke-width="8" fill="none"/><path d="M619.83,78.21 A34.5,34.5 0 0 1 621.99,78.98" stroke="hsl(288,100%,50%)" stroke-width="8" fill="none"/><path d="M621.54,78.81 A34.5,34.5 0 0 1 623.65,79.68" stroke="hsl(291,100%,50%)" stroke-width="8" fill="none"/><path d="M623.21,79.49 A34.5,34.5 0 0 1 625.28,80.47" stroke="hsl(294,100%,50%)" stroke-width="8" fill="none"/><path d="M624.85,80.25 A34.5,34.5 0 0 1 626.86,81.34" stroke="hsl(297,100%,50%)" stroke-width="8" fill="none"/><path d="M626.44,81.10 A34.5,34.5 0 0 1 628.39,82.30" stroke="hsl(300,100%,50%)" stroke-width="8" fill="none"/><path d="M627.99,82.04 A34.5,34.5 0 0 1 629.87,83.33" stroke="hsl(303,100%,50%)" stroke-width="8" fill="none"/><path d="M629.48,83.05 A34.5,34.5 0 0 1 631.30,84.44" stroke="hsl(306,100%,50%)" stroke-width="8" fill="none"/><path d="M630.92,84.14 A34.5,34.5 0 0 1 632.66,85.62" stroke="hsl(309,100%,50%)" stroke-width="8" fill="none"/><path d="M632.31,85.30 A34.5,34.5 0 0 1 633.96,86.88" stroke="hsl(312,100%,50%)" stroke-width="8" fill="none"/><path d="M633.62,86.54 A34.5,34.5 0 0 1 635.20,88.19" stroke="hsl(315,100%,50%)" stroke-width="8" fill="none"/><path d="M634.88,87.84 A34.5,34.5 0 0 1 636.36,89.58" stroke="hsl(318,100%,50%)" stroke-width="8" fill="none"/><path d="M636.06,89.20 A34.5,34.5 0 0 1 637.45,91.02" stroke="hsl(321,100%,50%)" stroke-width="8" fill="none"/><path d="M637.17,90.63 A34.5,34.5 0 0 1 638.46,92.51" stroke="hsl(324,100%,50%)" stroke-width="8" fill="none"/><path d="M638.20,92.11 A34.5,34.5 0 0 1 639.40,94.06" stroke="hsl(327,100%,50%)" stroke-width="8" fill="none"/><path d="M639.16,93.64 A34.5,34.5 0 0 1 640.25,95.65" stroke="hsl(330,100%,50%)" stroke-width="8" fill="none"/><path d="M640.03,95.22 A34.5,34.5 0 0 1 641.01,97.29" stroke="hsl(333,100%,50%)" stroke-width="8" fill="none"/><path d="M640.82,96.85 A34.5,34.5 0 0 1 641.69,98.96" stroke="hsl(336,100%,50%)" stroke-width="8" fill="none"/><path d="M641.52,98.51 A34.5,34.5 0 0 1 642.29,100.67" stroke="hsl(339,100%,50%)" stroke-width="8" fill="none"/><path d="M642.14,100.21 A34.5,34.5 0 0 1 642.79,102.40" stroke="hsl(342,100%,50%)" stroke-width="8" fill="none"/><path d="M642.66,101.94 A34.5,34.5 0 0 1 643.20,104.16" stroke="hsl(345,100%,50%)" stroke-width="8" fill="none"/><path d="M643.10,103.69 A34.5,34.5 0 0 1 643.51,105.94" stroke="hsl(348,100%,50%)" stroke-width="8" fill="none"/><path d="M643.44,105.47 A34.5,34.5 0 0 1 643.74,107.73" stroke="hsl(351,100%,50%)" stroke-width="8" fill="none"/><path d="M643.68,107.25 A34.5,34.5 0 0 1 643.86,109.53" stroke="hsl(354,100%,50%)" stroke-width="8" fill="none"/><path d="M643.84,109.05 A34.5,34.5 0 0 1 643.90,111.34" stroke="hsl(357,100%,50%)" stroke-width="8" fill="none"/><defs><linearGradient id="tl" x1="0" y1="0" x2="0" y2="1"><stop offset="0" stop-color="#000"/><stop offset="1" stop-color="#fff"/></linearGradient><linearGradient id="tr" gradientUnits="userSpaceOnUse" x1="593.8" y1="109.4" x2="641" y2="111.1"><stop offset="0" stop-color="#f00" stop-opacity="0"/><stop offset="1" stop-color="#f00" stop-opacity="1"/></linearGradient></defs><path d="M593.8,84.4 L641,111.1 L593.8,134.4 Z" fill="url(#tl)"/><path d="M593.8,84.4 L641,111.1 L593.8,134.4 Z" fill="url(#tr)"/><circle cx="642.3" cy="111.1" r="2.3" fill="none" stroke="#fff" stroke-width="0.9"/><circle cx="593.8" cy="133.8" r="2.2" fill="#fff"/><circle cx="529" cy="159.1" r="3" fill="#e8e8e8"/><circle cx="529" cy="159.1" r="1.2" fill="#aaa"/><defs><linearGradient id="os" x1="0" y1="0" x2="1" y2="0"><stop offset="0" stop-color="#b8b8b8"/><stop offset="1" stop-color="#e4e4e4"/></linearGradient></defs><rect x="535.5" y="157.4" width="114" height="3.4" rx="1.5" fill="url(#os)"/><circle cx="649.3" cy="159.2" r="2.8" fill="#2a2a2a" stroke="#f0f0f0" stroke-width="1"/><rect x="657" y="155.3" width="20" height="8.7" fill="#2d2d2d"/><rect x="679.5" y="155.3" width="8" height="8.7" fill="#2d2d2d"/><path d="M682.2,159 l1.3,1.3 l1.3,-1.3" stroke="#bbb" stroke-width="0.7" fill="none"/><rect x="520" y="168.7" width="170" height="10.8" fill="#363636"/><rect x="520" y="179.5" width="170" height="13.3" fill="#393939"/><rect x="551.5" y="182.8" width="24" height="9.2" fill="#262626"/><path d="M664,184.3 l1,-1 l1,1 M664,189 l1,1 l1,-1" stroke="#bbb" stroke-width="0.6" fill="none"/><circle cx="672.7" cy="186.7" r="2.4" fill="none" stroke="#ccc" stroke-width="1.2"/><rect x="680.8" y="183.5" width="4" height="6.5" rx="0.8" fill="#aaa"/><rect x="520.9" y="192.8" width="161.3" height="17.4" fill="#5a80b3"/><rect x="520" y="210.2" width="162.2" height="16.3" fill="#393939"/><rect x="682.2" y="192.8" width="7.8" height="173.9" fill="#323232"/><rect x="682.2" y="192.8" width="0.6" height="173.9" fill="#2a2a2a"/><rect x="532" y="194.5" width="15" height="15.5" fill="#1c1c1c"/><path d="M541,196 Q538,199 538.3,203 Q538.5,206.5 537.3,208.7" stroke="#f4f4f4" stroke-width="1.7" fill="none"/><rect x="532" y="210.8" width="15" height="15.5" fill="#1c1c1c"/><path d="M537.6,212 Q540.6,215 540.3,219 Q540,222.5 541.5,225" stroke="#f4f4f4" stroke-width="1.7" fill="none"/><rect x="666.5" y="198" width="6.5" height="6.5" rx="1.2" fill="#2a3444"/><path d="M668.3,202.5 L671.3,199.5" stroke="#eee" stroke-width="0.9"/><path d="M668.3,219 L671.3,216" stroke="#ccc" stroke-width="0.9"/><rect x="520" y="366.7" width="170" height="10.3" fill="#3a3a3a"/><path d="M525,371 L528.7,369 L532.4,371 L528.7,373 Z M525,373 L528.7,375 L532.4,373" stroke="#aaa" stroke-width="0.7" fill="#888"/><rect x="598" y="368.5" width="7.5" height="7" rx="0.8" fill="#ddd"/><rect x="599.5" y="370" width="4.5" height="4" fill="#333"/><circle cx="614.3" cy="372" r="3.2" fill="#ccc"/><path d="M614.3,368.8 A3.2,3.2 0 0 0 614.3,375.2 Z" fill="#444"/><text x="621.5" y="375" font-family="Liberation Serif" font-style="italic" font-size="8" fill="#999">fx</text><path d="M658,368.5 H661.5 L663,370 V375.5 H658 Z" fill="none" stroke="#ccc" stroke-width="0.7"/><rect x="669" y="368.5" width="2.3" height="7" fill="#bbb"/><rect x="672.2" y="368.5" width="2.3" height="7" fill="#bbb"/><rect x="680.7" y="369" width="4.5" height="6.5" rx="0.6" fill="#aaa"/><rect x="520" y="377" width="170" height="12.5" fill="#333"/><rect x="531.5" y="379.6" width="11.5" height="8.8" rx="1" fill="#474747"/><rect x="520" y="389.5" width="170" height="49.5" fill="#404040"/><rect x="531.3" y="400.6" width="17" height="16.4" fill="#5e5e5e"/><rect x="529.3" y="398.6" width="4" height="4" fill="#f4f4f4"/><rect x="538.5" y="399.3" width="2.6" height="2.6" fill="#9a9a9a"/><rect x="547.0" y="399.3" width="2.6" height="2.6" fill="#9a9a9a"/><rect x="530.0" y="407.5" width="2.6" height="2.6" fill="#9a9a9a"/><rect x="538.5" y="407.5" width="2.6" height="2.6" fill="#9a9a9a"/><rect x="547.0" y="407.5" width="2.6" height="2.6" fill="#9a9a9a"/><rect x="530.0" y="415.7" width="2.6" height="2.6" fill="#9a9a9a"/><rect x="538.5" y="415.7" width="2.6" height="2.6" fill="#9a9a9a"/><rect x="547.0" y="415.7" width="2.6" height="2.6" fill="#9a9a9a"/><rect x="565" y="394" width="30" height="9" rx="1" fill="#2a2a2a"/><rect x="606.5" y="394" width="30" height="9" rx="1" fill="#2a2a2a"/><rect x="565" y="405.9" width="30" height="9" rx="1" fill="#2a2a2a"/><rect x="606.5" y="405.9" width="30" height="9" rx="1" fill="#2a2a2a"/><rect x="565" y="422.8" width="30" height="9" rx="1" fill="#2a2a2a"/><rect x="606.5" y="422.8" width="31" height="9" rx="1" fill="#2a2a2a"/><path d="M590.3,426 l1.3,1.3 l1.3,-1.3 M632.5,426 l1.3,1.3 l1.3,-1.3" stroke="#bbb" stroke-width="0.7" fill="none"/><rect x="642.8" y="400" width="2" height="8" rx="1" fill="#666"/><rect x="559.5" y="54" width="0.6" height="6" fill="#4a4a4a"/><rect x="579.5" y="54" width="0.6" height="6" fill="#4a4a4a"/><rect x="599" y="54" width="0.6" height="6" fill="#4a4a4a"/><rect x="617.5" y="54" width="0.6" height="6" fill="#4a4a4a"/><rect x="653.5" y="54" width="0.6" height="6" fill="#4a4a4a"/><rect x="554.5" y="171" width="0.6" height="6" fill="#4a4a4a"/><rect x="573.5" y="171" width="0.6" height="6" fill="#4a4a4a"/><rect x="592.5" y="171" width="0.6" height="6" fill="#4a4a4a"/><rect x="607.5" y="171" width="0.6" height="6" fill="#4a4a4a"/><rect x="624.5" y="171" width="0.6" height="6" fill="#4a4a4a"/><rect x="642.5" y="171" width="0.6" height="6" fill="#4a4a4a"/><rect x="661.5" y="171" width="0.6" height="6" fill="#4a4a4a"/><path d="M526.5,55 L524.8,57 L526.5,59" stroke="#777" stroke-width="0.6" fill="none"/><path d="M526.5,172 L524.8,174 L526.5,176" stroke="#777" stroke-width="0.6" fill="none"/><rect x="681.5" y="55" width="4" height="4" fill="#bbb"/><rect x="686" y="58.5" width="1.2" height="1.2" fill="#bbb"/><rect x="681.5" y="172" width="4" height="4" fill="#bbb"/><rect x="686" y="175.5" width="1.2" height="1.2" fill="#bbb"/></svg><div class="t" style="left:532.8px;top:53.5px;width:25.5px;height:8px;overflow:hidden;font-size:6px;line-height:8px;color:#9a9a9a;">スウォッチ</div><div class="t" style="left:562px;top:53.5px;width:15.9px;height:8px;overflow:hidden;font-size:6px;line-height:8px;color:#f0f0f0;font-weight:bold;">カラー</div><div class="t" style="left:581px;top:53.5px;width:15.9px;height:8px;overflow:hidden;font-size:6px;line-height:8px;color:#9a9a9a;">諧調器</div><div class="t" style="left:601.3px;top:53.5px;width:15.9px;height:8px;overflow:hidden;font-size:6px;line-height:8px;color:#9a9a9a;">ブラシ</div><div class="t" style="left:619.6px;top:53.5px;width:30.3px;height:8px;overflow:hidden;font-size:6px;line-height:8px;color:#9a9a9a;">アピアランス</div><div class="t" style="left:654.8px;top:53.5px;width:20.7px;height:8px;overflow:hidden;font-size:6px;line-height:8px;color:#9a9a9a;">アセット</div><div class="t l" style="left:524.8px;top:126.8px;font-size:6px;line-height:6px;color:#cfcfcf;">H: 0</div><div class="t l" style="left:524.8px;top:133.4px;font-size:6px;line-height:6px;color:#cfcfcf;">S: 0</div><div class="t l" style="left:524.8px;top:140px;font-size:6px;line-height:6px;color:#cfcfcf;">L: 92</div><div class="t" style="left:525.4px;top:147.5px;width:20.7px;height:8px;overflow:hidden;font-size:6px;line-height:8px;color:#bbb;">不透明度</div><div class="t l b" style="left:659px;top:156.6px;font-size:6px;line-height:6px;color:#ddd;font-weight:bold;">100 %</div><div class="t" style="left:532.6px;top:170px;width:20.7px;height:8px;overflow:hidden;font-size:6px;line-height:8px;color:#f0f0f0;font-weight:bold;">レイヤー</div><div class="t" style="left:556.7px;top:170px;width:11.1px;height:8px;overflow:hidden;font-size:6px;line-height:8px;color:#888;">エフ</div><div class="t" style="left:575.6px;top:170px;width:11.1px;height:8px;overflow:hidden;font-size:6px;line-height:8px;color:#888;">スタ</div><div class="t" style="left:594px;top:170px;width:11.1px;height:8px;overflow:hidden;font-size:6px;line-height:8px;color:#888;">文字</div><div class="t" style="left:610px;top:170px;width:11.1px;height:8px;overflow:hidden;font-size:6px;line-height:8px;color:#888;">スト</div><div class="t" style="left:627px;top:170px;width:11.1px;height:8px;overflow:hidden;font-size:6px;line-height:8px;color:#888;">ダテ</div><div class="t" style="left:645px;top:170px;width:11.1px;height:8px;overflow:hidden;font-size:6px;line-height:8px;color:#888;">シン</div><div class="t" style="left:664px;top:170px;width:11.1px;height:8px;overflow:hidden;font-size:6px;line-height:8px;color:#888;">履歴</div><div class="t" style="left:524.8px;top:183.5px;width:25.5px;height:8px;overflow:hidden;font-size:6px;line-height:8px;color:#bbb;">不透明度:</div><div class="t l b" style="left:553.5px;top:184.5px;font-size:6px;line-height:6px;color:#eee;font-weight:bold;">100 %</div><svg class="a" style="left:569px;top:185px" width="5" height="4"><path d="M0.8,1 L2.5,2.8 L4.2,1" stroke="#ccc" stroke-width="0.8" fill="none"/></svg><div class="t" style="left:578.9px;top:183.5px;width:11.1px;height:8px;overflow:hidden;font-size:6px;line-height:8px;color:#eee;">標準</div><div class="t" style="left:550px;top:197.8px;width:25.5px;height:8px;overflow:hidden;font-size:6px;line-height:8px;color:#dde6f2;text-shadow:none;">(カーブ)</div><div class="t" style="left:550px;top:214.3px;width:25.5px;height:8px;overflow:hidden;font-size:6px;line-height:8px;color:#c8c8c8;text-shadow:none;">(カーブ)</div><div class="t" style="left:532.6px;top:380.3px;width:11.1px;height:8px;overflow:hidden;font-size:6px;line-height:8px;color:#f0f0f0;font-weight:bold;">変形</div><div class="t" style="left:546.3px;top:380.3px;width:11.1px;height:8px;overflow:hidden;font-size:6px;line-height:8px;color:#888;">履歴</div><div class="t" style="left:561.3px;top:380.3px;width:25.5px;height:8px;overflow:hidden;font-size:6px;line-height:8px;color:#888;">ナビゲータ</div><div class="t l" style="left:558px;top:396px;font-size:6px;line-height:6px;color:#bbb;">X:</div><div class="t l b" style="left:567.5px;top:396px;font-size:6px;line-height:6px;color:#eee;font-weight:bold;">891.1 px</div><div class="t l" style="left:600px;top:396px;font-size:6px;line-height:6px;color:#bbb;">W:</div><div class="t l b" style="left:609px;top:396px;font-size:6px;line-height:6px;color:#eee;font-weight:bold;">177.7 px</div><div class="t l" style="left:558px;top:408px;font-size:6px;line-height:6px;color:#bbb;">Y:</div><div class="t l b" style="left:567.5px;top:408px;font-size:6px;line-height:6px;color:#eee;font-weight:bold;">200 px</div><div class="t l" style="left:601px;top:408px;font-size:6px;line-height:6px;color:#bbb;">H:</div><div class="t l b" style="left:609px;top:408px;font-size:6px;line-height:6px;color:#eee;font-weight:bold;">621 px</div><div class="t l" style="left:556.5px;top:424.5px;font-size:6px;line-height:6px;color:#bbb;">R:</div><div class="t l b" style="left:567.5px;top:424.5px;font-size:6px;line-height:6px;color:#eee;font-weight:bold;">0 °</div><div class="t l" style="left:599px;top:424.5px;font-size:6px;line-height:6px;color:#bbb;">S:</div><div class="t l b" style="left:609px;top:424.5px;font-size:6px;line-height:6px;color:#eee;font-weight:bold;">-14.9 °</div><div class="t" style="left:8px;top:441px;font-size:6px;line-height:6px;color:#aaa;letter-spacing:0.08px">'カーブ' が選択されています。 <b style="color:#fff">ドラッグ</b>で選択範囲を移動します。<b style="color:#fff">クリック</b>で別のオブジェクトを選択します。何もない領域を<b style="color:#fff">クリック</b>すると、選択が解除されます。</div></div></body></html>
